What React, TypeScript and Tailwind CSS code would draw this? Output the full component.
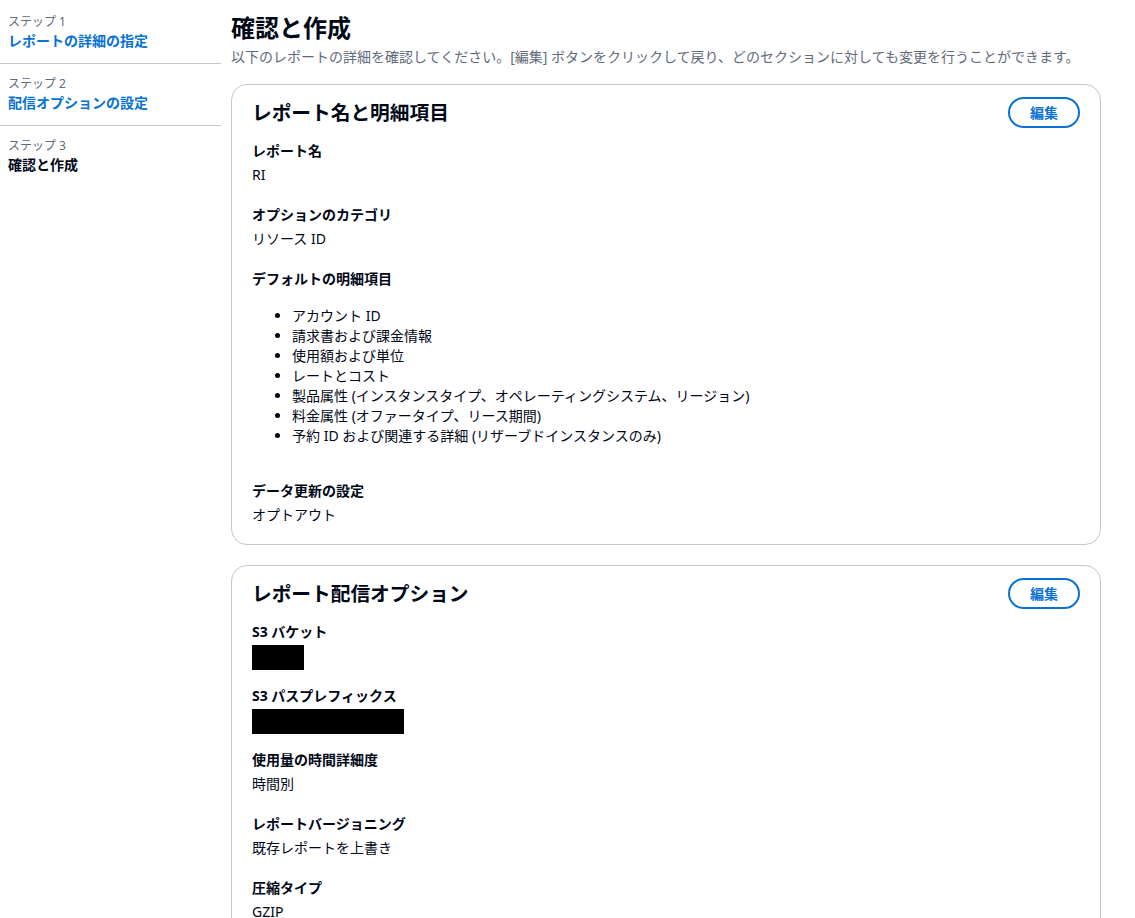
const font = { fontFamily: '"Noto Sans", "Noto Sans CJK JP", sans-serif' };

const steps = [
  { label: 'ステップ 1', title: 'レポートの詳細の指定', link: true },
  { label: 'ステップ 2', title: '配信オプションの設定', link: true },
  { label: 'ステップ 3', title: '確認と作成', link: false },
];

const defaultItems = [
  'アカウント ID',
  '請求書および課金情報',
  '使用額および単位',
  'レートとコスト',
  '製品属性 (インスタンスタイプ、オペレーティングシステム、リージョン)',
  '料金属性 (オファータイプ、リース期間)',
  '予約 ID および関連する詳細 (リザーブドインスタンスのみ)',
];

const Field = ({ label, children }: { label: string; children: React.ReactNode }) => (
  <div>
    <div className="text-sm leading-[22px] font-bold text-[#000716]">{label}</div>
    <div className="mt-[2px] text-sm leading-[22px] text-[#000716]">{children}</div>
  </div>
);

// redacted value in the screenshot: a plain black block
const Redacted = ({ label, width }: { label: string; width: string }) => (
  <div className="-mb-[3px]">
    <div className="text-sm leading-[22px] font-bold text-[#000716]">{label}</div>
    <div className={`mt-[2px] h-[25px] bg-black ${width}`} />
  </div>
);

const Card = ({ title, children }: { title: string; children: React.ReactNode }) => (
  <section className="rounded-2xl border border-[#c6c6cd] bg-white px-5 pt-3 pb-[18px]">
    <div className="flex items-center justify-between">
      <h2 className="text-[19.7px] leading-7 font-bold text-[#000716]">{title}</h2>
      <button className="h-[31px] rounded-full border-2 border-[#0972d3] px-5 text-sm font-bold text-[#0972d3]">
        編集
      </button>
    </div>
    <div className="mt-3 flex flex-col gap-[18px]">{children}</div>
  </section>
);

export default function App() {
  return (
    <div className="flex min-h-screen bg-white" style={font}>
      <nav className="w-[221px] shrink-0 pt-[2px]">
        {steps.map((s, i) => (
          <div key={s.label} className={i < steps.length - 1 ? 'border-b border-[#c6c6cd]' : ''}>
            <div className="flex flex-col gap-[1px] px-2 pt-3 pb-3">
              <div className="text-xs leading-4 text-[#5f6b7a]">{s.label}</div>
              <div className={`text-sm leading-5 font-bold ${s.link ? 'text-[#0972d3]' : 'text-[#000716]'}`}>
                {s.title}
              </div>
            </div>
          </div>
        ))}
      </nav>

      <main className="ml-[10px] flex-1 pr-[34px] pt-[13px]">
        <h1 className="text-2xl leading-[30px] font-bold text-[#000716]">確認と作成</h1>
        <p className="mt-1 text-sm leading-5 text-[#5f6b7a]">
          以下のレポートの詳細を確認してください。[編集] ボタンをクリックして戻り、どのセクションに対しても変更を行うことができます。
        </p>

        <div className="mt-[17px] flex flex-col gap-5">
          <Card title="レポート名と明細項目">
            <Field label="レポート名">RI</Field>
            <Field label="オプションのカテゴリ">リソース ID</Field>
            <div>
              <div className="text-sm leading-[22px] font-bold text-[#000716]">デフォルトの明細項目</div>
              <ul className="my-4 list-disc pl-10 text-sm leading-5 text-[#000716]">
                {defaultItems.map((item) => (
                  <li key={item}>{item}</li>
                ))}
              </ul>
            </div>
            <Field label="データ更新の設定">オプトアウト</Field>
          </Card>

          <Card title="レポート配信オプション">
            <Redacted label="S3 バケット" width="w-[52px]" />
            <Redacted label="S3 パスプレフィックス" width="w-[152px]" />
            <Field label="使用量の時間詳細度">時間別</Field>
            <Field label="レポートバージョニング">既存レポートを上書き</Field>
            <Field label="圧縮タイプ">GZIP</Field>
          </Card>
        </div>
      </main>
    </div>
  );
}
